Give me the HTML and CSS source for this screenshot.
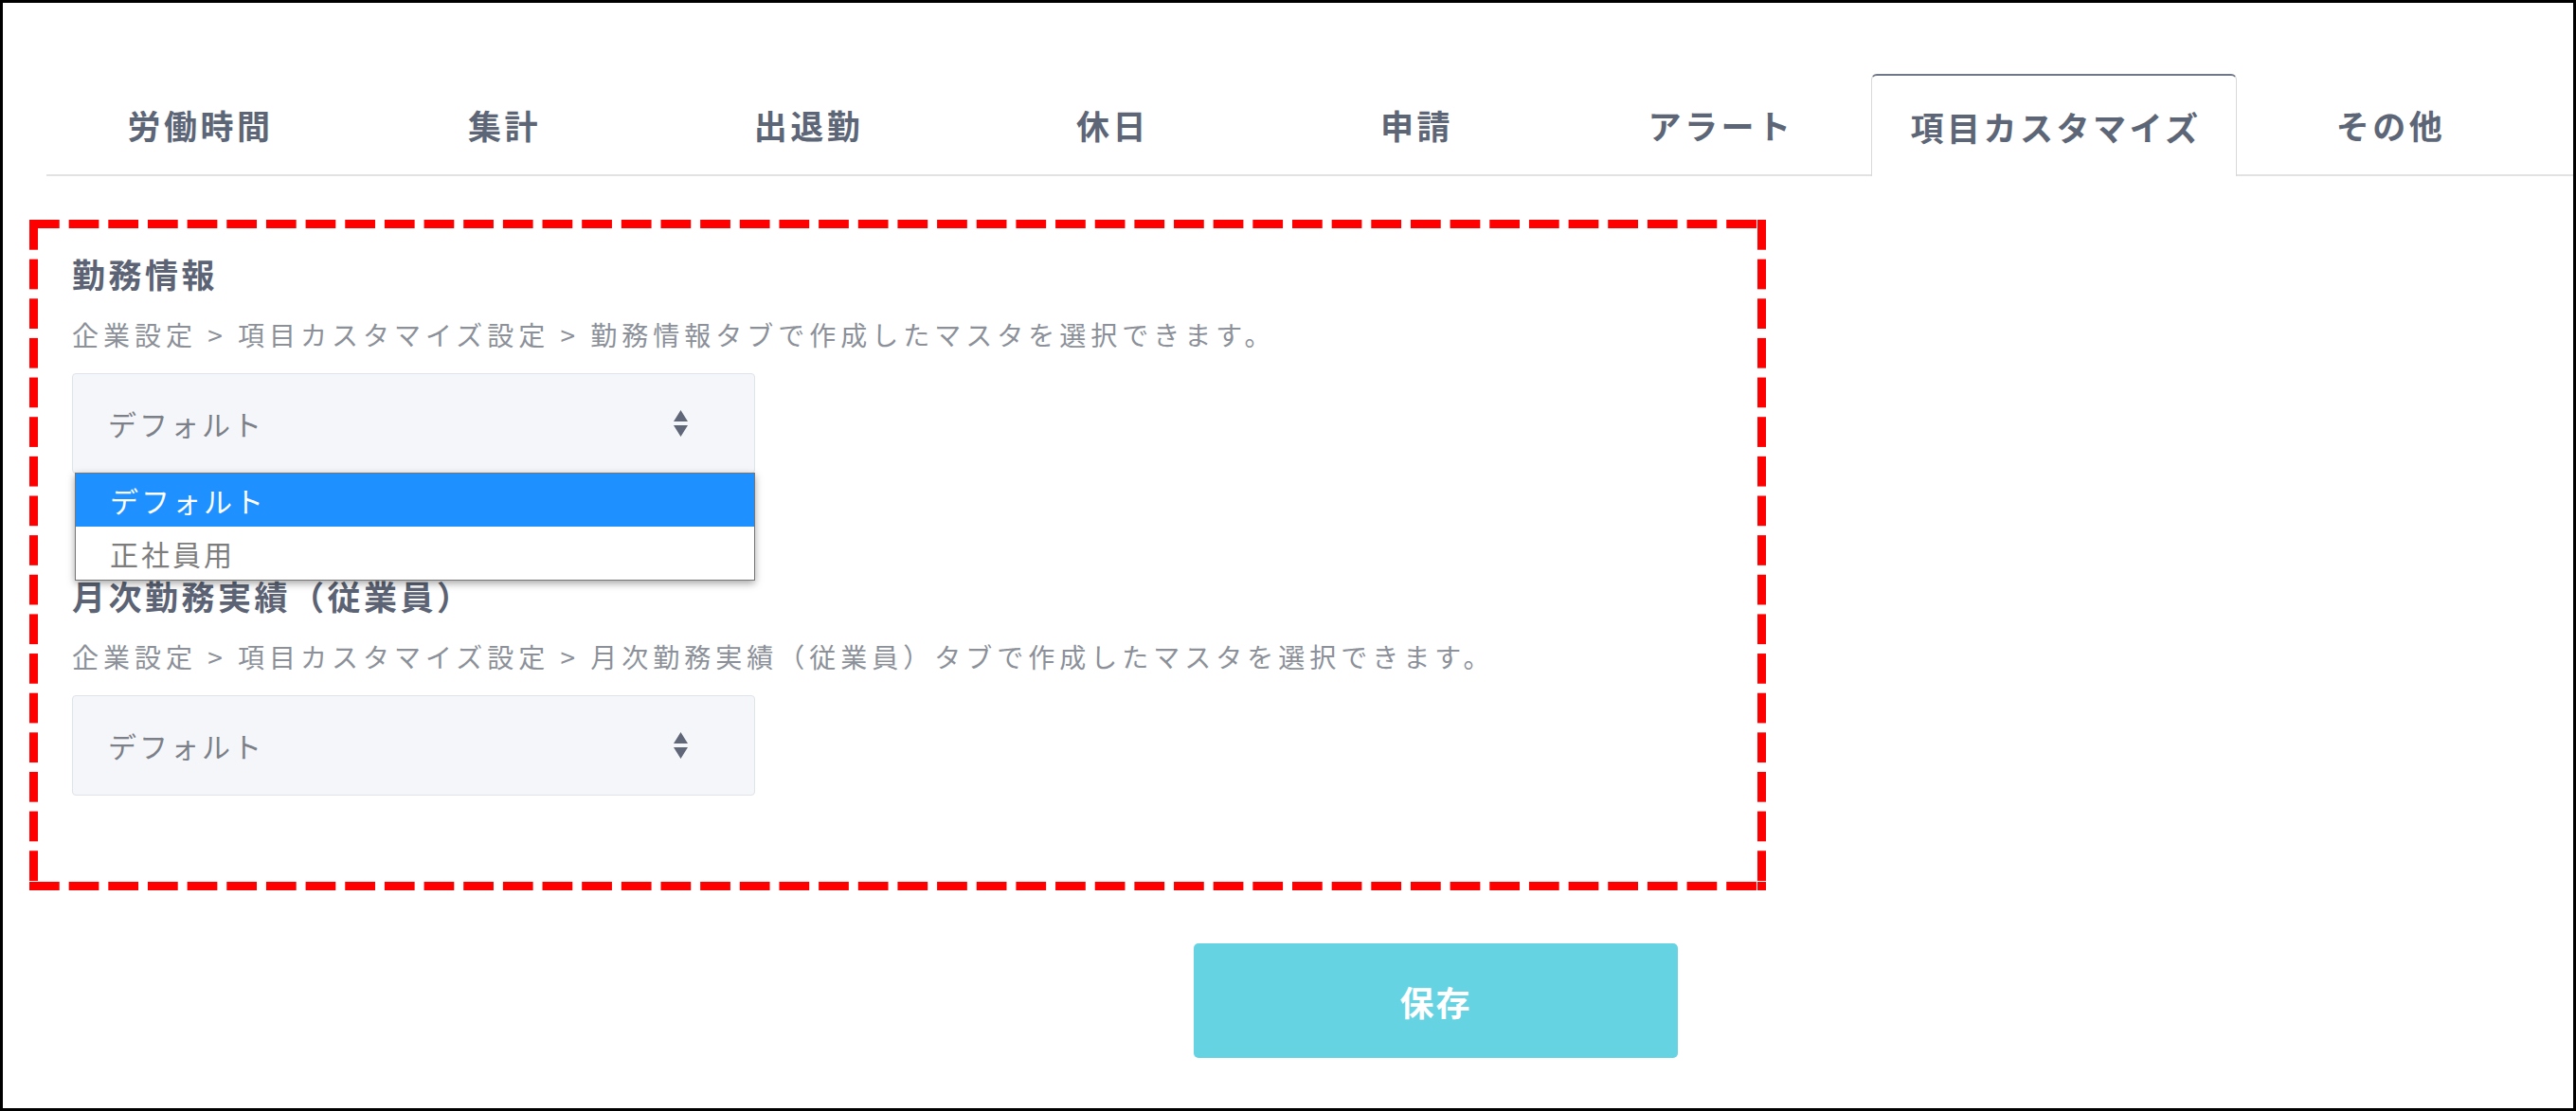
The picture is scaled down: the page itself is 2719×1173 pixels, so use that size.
FILE: index.html
```html
<!DOCTYPE html>
<html lang="ja">
<head>
  <meta charset="UTF-8">
  <meta name="viewport" content="width=device-width, initial-scale=1.0">
  <title>項目カスタマイズ</title>
  <link rel="stylesheet" href="styles.css">
</head>
<body>
  <div class="frame">
    <nav class="tabs">
      <div class="tab">労働時間</div>
      <div class="tab">集計</div>
      <div class="tab">出退勤</div>
      <div class="tab">休日</div>
      <div class="tab">申請</div>
      <div class="tab">アラート</div>
      <div class="tab active">項目カスタマイズ</div>
      <div class="tab">その他</div>
    </nav>

    <section class="panel">
      <div class="field">
        <h3>勤務情報</h3>
        <p class="note">企業設定 &gt; 項目カスタマイズ設定 &gt; 勤務情報タブで作成したマスタを選択できます。</p>
        <div class="select-wrap">
          <div class="select">
            <span>デフォルト</span>
            <svg class="arrows" width="15" height="28" viewBox="0 0 15 28"><path d="M7.5 0 L15 12 L0 12 Z M0 16 L15 16 L7.5 28 Z"/></svg>
          </div>
          <ul class="options">
            <li class="selected">デフォルト</li>
            <li>正社員用</li>
          </ul>
        </div>
      </div>

      <div class="field">
        <h3>月次勤務実績（従業員）</h3>
        <p class="note">企業設定 &gt; 項目カスタマイズ設定 &gt; 月次勤務実績（従業員）タブで作成したマスタを選択できます。</p>
        <div class="select-wrap">
          <div class="select">
            <span>デフォルト</span>
            <svg class="arrows" width="15" height="28" viewBox="0 0 15 28"><path d="M7.5 0 L15 12 L0 12 Z M0 16 L15 16 L7.5 28 Z"/></svg>
          </div>
        </div>
      </div>
    </section>

    <div class="actions">
      <button class="btn-save">保存</button>
    </div>
  </div>
</body>
</html>
```

FILE: styles.css
```css
* {
  box-sizing: border-box;
}

html, body {
  margin: 0;
  padding: 0;
}

body {
  font-family: "Noto Sans CJK JP", "Noto Sans", sans-serif;
  background-color: #fff;
}

.frame {
  width: 2719px;
  height: 1173px;
  border: 3px solid #000;
  overflow: hidden;
}

/* タブ */
.tabs {
  display: flex;
  height: 108px;
  margin: 75px 0 0 46px;
  border-bottom: 2px solid #e2e2e2;
}

.tab {
  min-width: 321px;
  height: 106px;
  display: flex;
  align-items: center;
  justify-content: center;
  padding: 0 38px 0 42px;
  font-size: 35px;
  font-weight: bold;
  letter-spacing: 3.5px;
  color: #5d6677;
}

.tab.active {
  min-width: 386px;
  height: 108px;
  margin-bottom: -2px;
  padding: 0 36px 0 40px;
  background-color: #fff;
  border: 1px solid #d9d9d9;
  border-top: 2px solid #6f7788;
  border-bottom: none;
  border-radius: 6px 6px 0 0;
}

/* 赤枠（破線） */
.panel {
  width: 1833px;
  margin: 46px 0 0 28px;
  padding: 35px 9px 100px 45px;
  background:
    linear-gradient(#ff0000, #ff0000) right bottom / 9px 9px no-repeat,
    linear-gradient(to right, #ff0000 32px, transparent 32px) left top / 41.5px 9px round no-repeat,
    linear-gradient(to right, #ff0000 32px, transparent 32px) left bottom / 41.5px 9px round no-repeat,
    linear-gradient(to bottom, #ff0000 32px, transparent 32px) left top / 9px 41.5px no-repeat round,
    linear-gradient(to bottom, #ff0000 32px, transparent 32px) right top / 9px 41.5px no-repeat round;
}

.field + .field {
  margin-top: 107px;
}

.field h3 {
  margin: 0;
  font-size: 35px;
  line-height: 44px;
  letter-spacing: 3.5px;
  color: #5b6374;
}

.note {
  margin: 22px 0 0;
  font-size: 28px;
  line-height: 40px;
  letter-spacing: 5px;
  color: #8b9099;
}

.select-wrap {
  position: relative;
  width: 721px;
  margin-top: 21px;
}

.select {
  height: 106px;
  display: flex;
  align-items: center;
  justify-content: space-between;
  padding: 0 70px 0 37px;
  background-color: #f5f6f9;
  border: 1px solid #dfe3ea;
  border-radius: 4px;
  font-size: 30px;
  letter-spacing: 3px;
  color: #7c8088;
}

.arrows {
  fill: #5f6778;
}

.options {
  position: absolute;
  top: 105px;
  left: 3px;
  width: 718px;
  margin: 0;
  padding: 0;
  list-style: none;
  background-color: #fff;
  border: 1px solid #767676;
  box-shadow: 0 3px 8px rgba(0, 0, 0, 0.35);
  z-index: 2;
}

.options li {
  height: 56px;
  line-height: 56px;
  padding-left: 36px;
  font-size: 30px;
  letter-spacing: 3px;
  color: #7d7d7d;
}

.options li.selected {
  background-color: #1e90ff;
  color: #fff;
}

/* 保存 */
.actions {
  margin: 56px 0 0 1257px;
}

.btn-save {
  width: 511px;
  height: 121px;
  background-color: #66d3e3;
  border: none;
  border-radius: 5px;
  font-family: inherit;
  font-size: 36px;
  font-weight: bold;
  letter-spacing: 2px;
  color: #fff;
}
```
